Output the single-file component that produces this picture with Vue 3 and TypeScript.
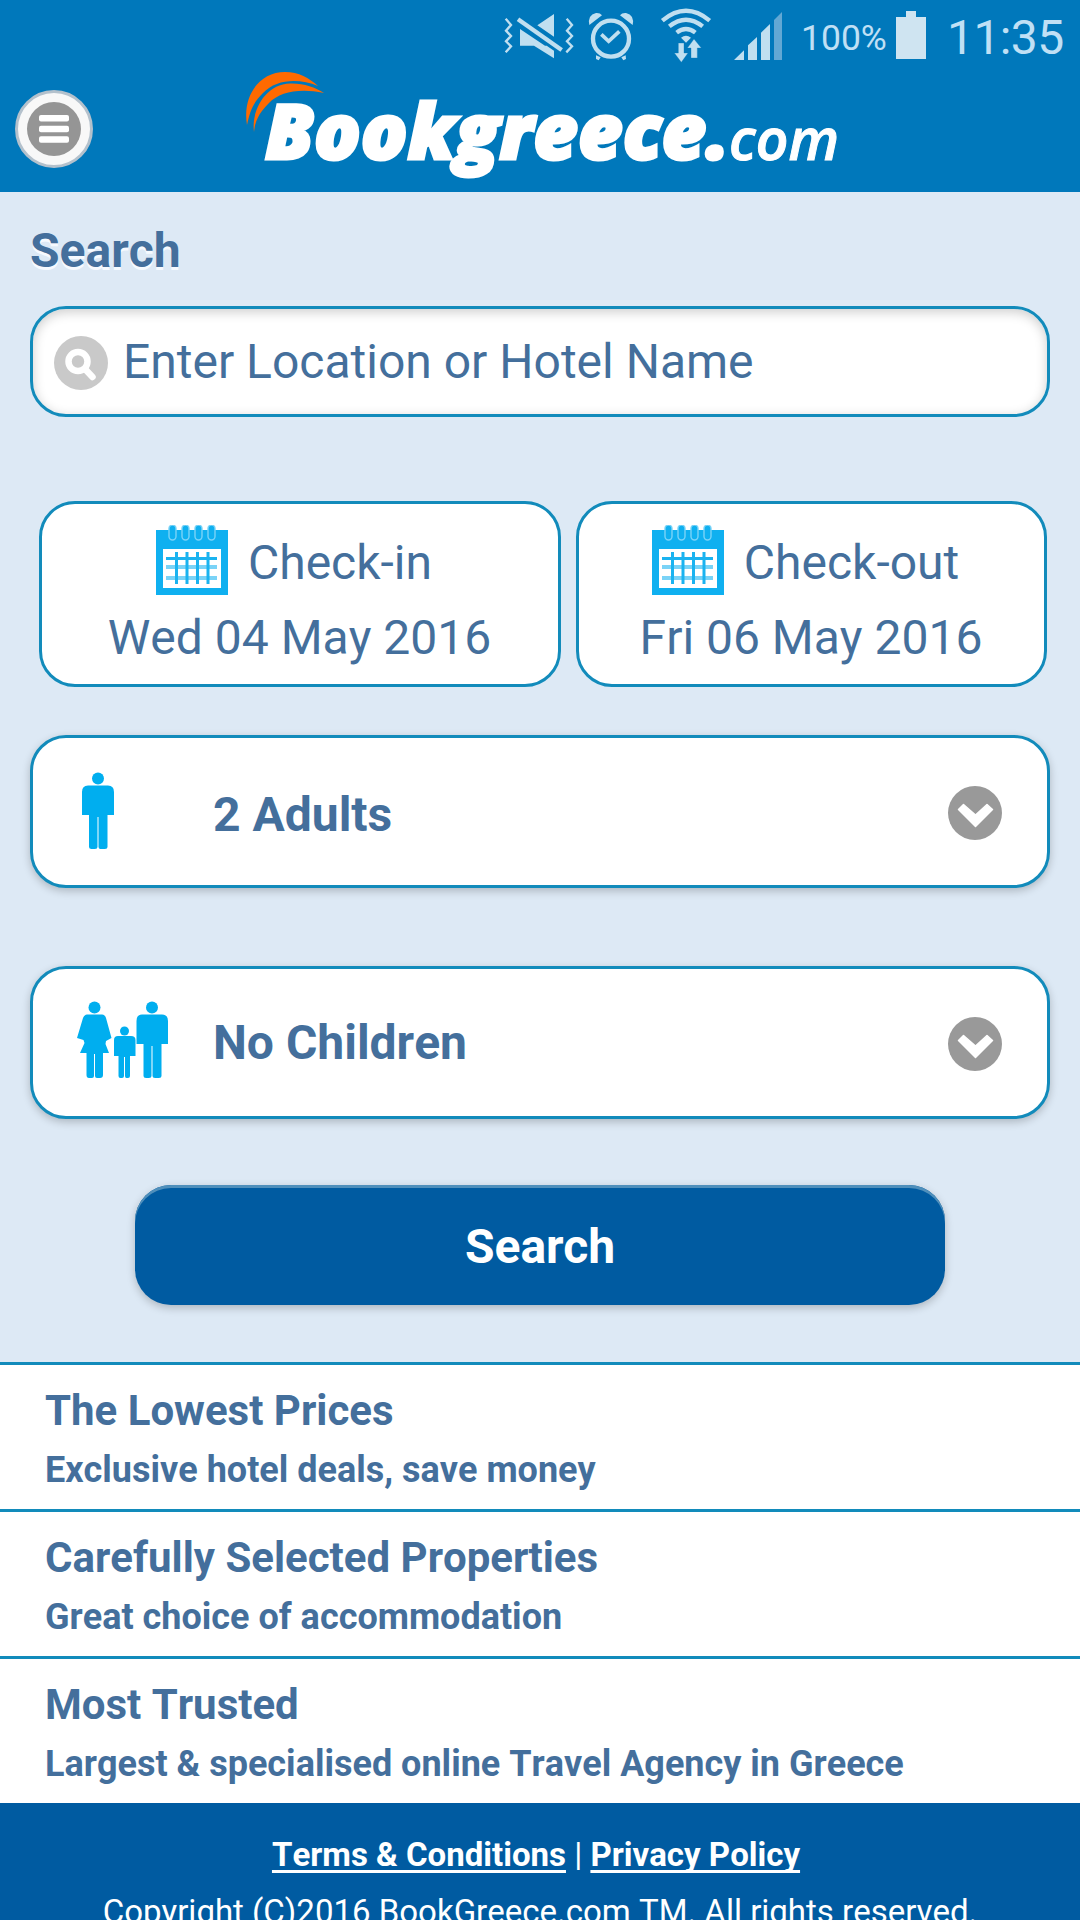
<script setup lang="ts">
interface Stay {
  label: string
  date: string
  kind: string
}

interface Perk {
  title: string
  text: string
}

const stays: Stay[] = [
  { label: 'Check-in', date: 'Wed 04 May 2016', kind: 'in' },
  { label: 'Check-out', date: 'Fri 06 May 2016', kind: 'out' },
]

const guests: string[] = ['2 Adults', 'No Children']

const perks: Perk[] = [
  { title: 'The Lowest Prices', text: 'Exclusive hotel deals, save money' },
  { title: 'Carefully Selected Properties', text: 'Great choice of accommodation' },
  { title: 'Most Trusted', text: 'Largest & specialised online Travel Agency in Greece' },
]
</script>

<template>
  <div class="screen">
    <header class="top">
      <div class="status">
        <svg class="status-icons" viewBox="0 0 900 225" fill="#c0dff0">
          <!-- muted speaker with vibration marks -->
          <g fill="none" stroke="#c0dff0" stroke-width="7">
            <path d="M47 56L63 75L48 92L63 108L48 124L63 139L47 157" />
            <path d="M230 56L246 75L231 92L246 108L231 124L246 139L229 157" />
          </g>
          <path d="M90 87L165 137H90Z M142 76L192 42V110Z M132 137H170L192 152V175Z" />
          <path d="M84 58L215 150" stroke="#c0dff0" stroke-width="13" />
          <!-- alarm clock -->
          <circle cx="363" cy="116" r="54" fill="none" stroke="#c0dff0" stroke-width="13" />
          <path d="M334 103L356 124L388 94" fill="none" stroke="#c0dff0" stroke-width="11" />
          <path d="M298 75Q292 45 318 39Q330 38 336 46Z M428 75Q434 45 408 39Q396 38 390 46Z" />
          <path d="M318 166L332 172L326 181L318 177Z M407 166L394 172L400 181L408 177Z" />
          <!-- wifi with transfer arrows -->
          <g fill="none" stroke="#c0dff0" stroke-width="13">
            <path d="M517 62Q588 3 659 62" />
            <path d="M538 79Q588 39 638 79" />
            <path d="M560 98Q588 76 616 98" />
          </g>
          <path d="M573 113Q588 101 603 113L588 128Z" />
          <path d="M565 129H582V159H594L574 187L553 159H565Z" stroke="#0078bb" stroke-width="1" />
          <path d="M603 174V144H592L612 117L634 144H622V174Z" stroke="#0078bb" stroke-width="1" />
          <!-- signal strength -->
          <path d="M732 180L762 151V180Z M774 136L801 111V180H774Z M813 98L840 72V180H813Z" />
          <path d="M852 60L876 36V180H852Z" fill="#62a8d4" />
        </svg>
        <span class="percent">100%</span>
        <svg class="battery" viewBox="0 0 30 48"><path d="M10 0H20V6H30V48H0V6H10Z" fill="#cfe4f1" /></svg>
        <span class="clock">11:35</span>
      </div>
      <div class="nav">
        <button class="menu" aria-label="Menu">
          <svg viewBox="0 0 54 54">
            <circle cx="27" cy="27" r="27" fill="#959595" />
            <g fill="#fff">
              <rect x="12" y="13" width="30" height="6.5" rx="2" />
              <rect x="12" y="23.7" width="30" height="6.5" rx="2" />
              <rect x="12" y="34.3" width="30" height="6.5" rx="2" />
            </g>
          </svg>
        </button>
        <svg class="logo" viewBox="235 70 620 122">
          <g fill="#ff6a00">
            <path d="M247 125C242 95 260 72 285 72C299 72 309 78 318 86C299 78 276 79 263 93C252 104 250 112 247 125Z" />
            <path d="M254 132C251 110 266 84 290 83.500C303 83 315 87 324 93C299 88 280 92 269 103C258 114 255 122 254 132Z" />
          </g>
          <text class="brand" x="265" y="158.500" textLength="465" lengthAdjust="spacingAndGlyphs">Bookgreece.</text>
          <text class="tld" x="729" y="159.500" textLength="110" lengthAdjust="spacingAndGlyphs">com</text>
        </svg>
      </div>
    </header>

    <main class="form">
      <h1>Search</h1>
      <div class="field">
        <svg viewBox="0 0 54 54">
          <circle cx="27" cy="27" r="27" fill="#c9c9c9" />
          <circle cx="24" cy="25.500" r="9.500" fill="none" stroke="#fff" stroke-width="6.500" />
          <path d="M31 33L38.500 41" stroke="#fff" stroke-width="6.500" stroke-linecap="round" />
        </svg>
        <span>Enter Location or Hotel Name</span>
      </div>

      <div class="stays">
        <div v-for="stay in stays" :key="stay.kind" :class="['stay', stay.kind]">
          <div class="stay-head">
            <svg viewBox="0 0 72 70">
              <path d="M0 5H72V70H0Z" fill="#0fb0f0" />
              <path d="M7 24H65V63H7Z" fill="#fff" />
              <g fill="#0fb0f0" stroke="#7ad3f7" stroke-width="1.400">
                <rect x="13" y="0" width="7" height="15" rx="3.500" />
                <rect x="26" y="0" width="7" height="15" rx="3.500" />
                <rect x="39" y="0" width="7" height="15" rx="3.500" />
                <rect x="52" y="0" width="7" height="15" rx="3.500" />
              </g>
              <path d="M10 42H61M10 53H61" stroke="#7ad3f7" stroke-width="4" />
              <path d="M20.500 27V59M31 27V59M41.500 27V59M52 27V59M10 33.500H61" stroke="#1ab3f0" stroke-width="3" />
            </svg>
            <span>{{ stay.label }}</span>
          </div>
          <div class="stay-date">{{ stay.date }}</div>
        </div>
      </div>

      <div v-for="(guest, i) in guests" :key="guest" :class="['select', i === 0 ? 'adults' : 'children']">
        <svg class="people" viewBox="0 0 100 78" fill="#00aeef">
          <template v-if="i === 0">
            <circle cx="22" cy="6.500" r="6" />
            <path d="M12 13.500H32Q38 13.500 38 20V43H31.500V75Q31.500 77 29 77H24.500Q22.500 77 22.500 75V45H21.500V75Q21.500 77 19 77H15.500Q13 77 13 75V43H6V20Q6 13.500 12 13.500Z" />
          </template>
          <template v-else>
            <circle cx="18.500" cy="6.500" r="6" />
            <path d="M11 13.500H26Q29 13.500 30 17L35.500 37L30 40L29.500 43L33 52H27V74Q27 77 24 77H21Q19 77 19 75V53H18V75Q18 77 16 77H13Q10.500 77 10.500 74V52H4L8.500 42L7.500 39L1 37L7 17Q8.500 13.500 11 13.500Z" />
            <circle cx="48.500" cy="30" r="4.500" />
            <path d="M42 35H55Q59.500 35 59.500 39V55H54V75Q54 77 52 77H50.500Q49 77 49 75V56H48V75Q48 77 46 77H44.500Q42.500 77 42.500 75V55H38V39Q38 35 42 35Z" />
            <circle cx="76" cy="6.500" r="6" />
            <path d="M66 13.500H86Q92 13.500 92 20V43H85.500V75Q85.500 77 83 77H79Q76.500 77 76.500 75V45H75.500V75Q75.500 77 73 77H70Q67.500 77 67.500 75V43H60.500V20Q60.500 13.500 66 13.500Z" />
          </template>
        </svg>
        <span class="guest">{{ guest }}</span>
        <svg class="arrow" viewBox="0 0 54 54">
          <circle cx="27" cy="27" r="27" fill="#999" />
          <path d="M15.500 18.500L10.500 23.500L27.500 40.500L44.500 23.500L39 18.500L27.500 29Z" fill="#fff" stroke="#fff" stroke-width="1.500" stroke-linejoin="round" />
        </svg>
      </div>

      <button class="submit">Search</button>
    </main>

    <section class="perks">
      <div v-for="perk in perks" :key="perk.title" class="perk">
        <h2>{{ perk.title }}</h2>
        <p>{{ perk.text }}</p>
      </div>
    </section>

    <footer class="foot">
      <div class="links"><a>Terms &amp; Conditions</a> | <a>Privacy Policy</a></div>
      <div>Copyright (C)2016 BookGreece.com TM. All rights reserved.</div>
    </footer>
  </div>
</template>

<style>
body {
  margin: 0;
  overflow: hidden;
}
</style>

<style scoped>
.screen {
  width: 1080px;
  height: 1920px;
  overflow: hidden;
  background: #dde9f5;
  color: #446f9c;
  font-family: Roboto, "Liberation Sans", sans-serif;
  font-size: 48px;
  font-kerning: none;
}
.screen * {
  box-sizing: border-box;
}
svg {
  display: block;
  flex: none;
}
.top {
  height: 192px;
  background: #0078bb;
}
.status {
  display: flex;
  height: 70px;
  padding-left: 490px;
  color: #c0e0f5;
}
.status-icons {
  width: 300px;
  height: 75px;
}
.percent {
  width: 106px;
  padding-left: 11px;
  font-size: 35.5px;
  line-height: 76px;
  white-space: nowrap;
}
.battery {
  width: 30px;
  height: 48px;
  margin-top: 11px;
}
.clock {
  margin-left: 21px;
  font-size: 48px;
  letter-spacing: -0.6px;
  line-height: 75px;
  white-space: nowrap;
}
.nav {
  display: flex;
  height: 122px;
}
.menu {
  display: flex;
  align-items: center;
  justify-content: center;
  width: 78px;
  height: 78px;
  margin: 20px 142px 0 15px;
  padding: 0;
  border: 3px solid #b4c1cc;
  border-radius: 50%;
  background: #f8f8f8;
}
.menu svg {
  width: 54px;
  height: 54px;
}
.logo {
  width: 620px;
  height: 122px;
}
.brand,
.tld {
  font-family: "Open Sans", sans-serif;
  font-style: italic;
  fill: #fff;
  stroke: #fff;
}
.brand {
  font-size: 76px;
  font-weight: 800;
  stroke-width: 3px;
}
.tld {
  font-size: 58px;
  font-weight: 600;
  stroke-width: 1px;
}
.form {
  height: 1170px;
  padding: 31px 30px 0;
}
h1 {
  height: 56px;
  margin: 0 0 27px;
  font-size: 48px;
  line-height: 56px;
  text-shadow: 0 3px 0 #f6faff;
}
.field {
  display: flex;
  align-items: center;
  height: 111px;
  padding-left: 21px;
  border: 3px solid #128bbb;
  border-radius: 36px;
  background: #fff;
  box-shadow: inset 0 3px 12px rgba(0, 0, 0, 0.2);
}
.field svg {
  width: 54px;
  height: 54px;
  margin: 2px 15px 0 0;
}
.stays {
  display: flex;
  gap: 15px;
  height: 186px;
  margin: 84px 3px 48px 9px;
}
.stay {
  padding: 20px 0 0;
  border: 3px solid #128bbb;
  border-radius: 36px;
  background: #fff;
  text-align: center;
}
.stay.in {
  width: 522px;
}
.stay.out {
  width: 471px;
}
.stay-head {
  display: flex;
  justify-content: center;
  height: 76px;
  padding-right: 12px;
  line-height: 77px;
}
.stay-head svg {
  width: 72px;
  height: 70px;
  margin: 1px 20px 0 0;
}
.stay-date {
  padding-right: 1px;
  line-height: 75px;
}
.select {
  display: flex;
  align-items: center;
  height: 153px;
  padding: 0 45px 0 43px;
  border: 3px solid #128bbb;
  border-radius: 36px;
  background: #fff;
  box-shadow: 0 3px 9px rgba(0, 0, 0, 0.22);
  font-weight: 700;
}
.select + .select {
  margin-top: 78px;
}
.people {
  width: 100px;
  height: 78px;
  margin: 0 37px 2px 0;
}
.adults .guest {
  padding-top: 5px;
}
.children .people {
  margin-bottom: 6px;
}
.arrow {
  width: 54px;
  height: 54px;
  margin-left: auto;
  margin-top: 2px;
}
.submit {
  display: block;
  width: 810px;
  height: 120px;
  margin: 66px auto 0;
  padding: 3px 0 0;
  border: 0;
  border-radius: 36px;
  background: #005ba1;
  box-shadow: inset 0 3px 0 #4f8fbb, 0 3px 9px rgba(0, 0, 0, 0.22);
  color: #fff;
  font: 700 48px/117px Roboto, "Liberation Sans", sans-serif;
}
.perk {
  height: 147px;
  padding: 18px 45px 0;
  border-top: 3px solid #128bbb;
  background: #fff;
}
h2 {
  margin: 0;
  font-size: 42px;
  line-height: 56px;
}
p {
  margin: 0;
  font-size: 36px;
  font-weight: 700;
  line-height: 62px;
}
.foot {
  height: 117px;
  padding-top: 23px;
  overflow: hidden;
  background: #005ba1;
  color: #fff;
  font-size: 33px;
  line-height: 57px;
  text-align: center;
  white-space: nowrap;
}
.links {
  padding-right: 8px;
}
.foot a {
  font-weight: 700;
  text-decoration: underline;
  text-decoration-thickness: 3px;
  text-underline-offset: 4px;
  text-decoration-skip-ink: none;
}
</style>
